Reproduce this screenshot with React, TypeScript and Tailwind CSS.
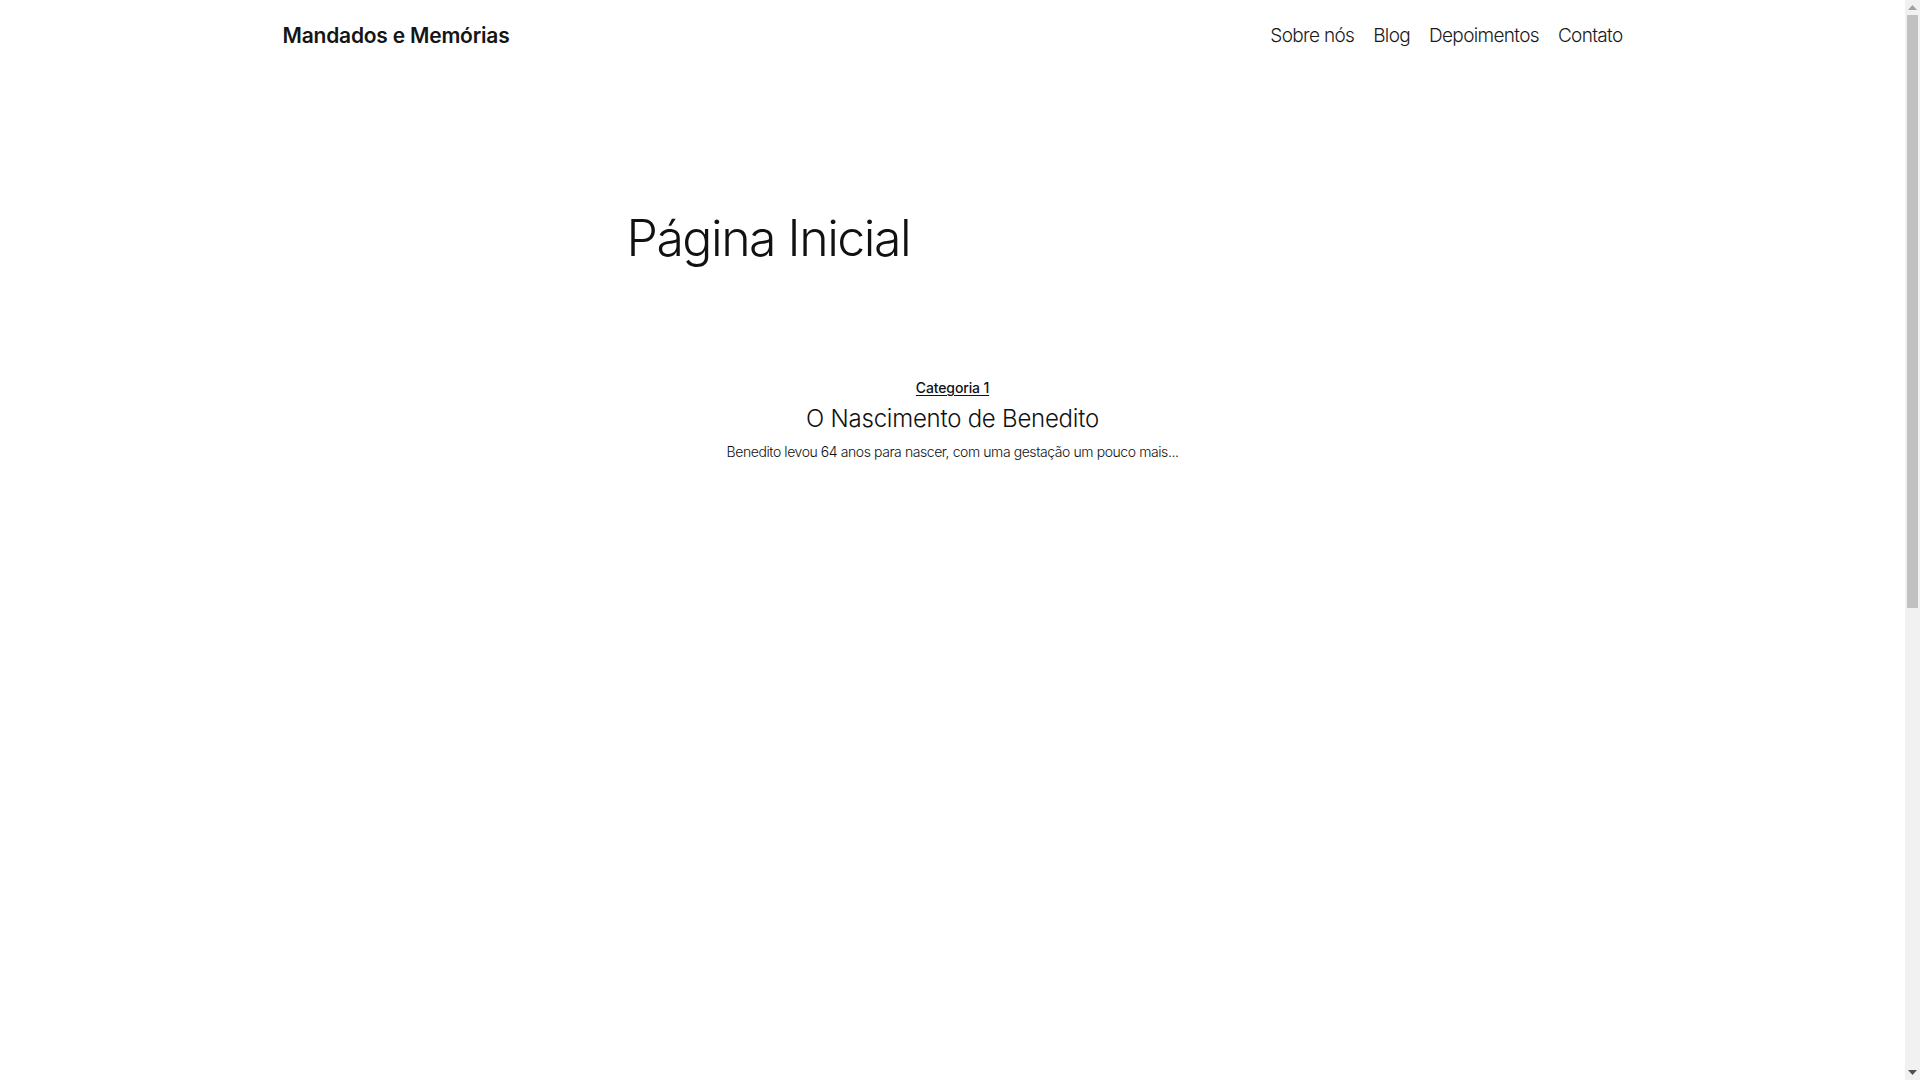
export default function App() {
  const navItems = ['Sobre nós', 'Blog', 'Depoimentos', 'Contato'];

  return (
    <div className="flex h-screen overflow-hidden bg-white text-[#111111] font-['Inter',sans-serif]">
      <div className="flex-1 min-w-0">
        {/* Header */}
        <header className="h-[72px]">
          <div className="max-w-[1340px] mx-auto h-full flex items-center justify-between">
            <a href="#" className="text-[21px] font-semibold tracking-[-0.01em] text-[#151515]">
              Mandados e Memórias
            </a>
            <nav className="flex items-center gap-[19px]">
              {navItems.map((item) => (
                <a
                  key={item}
                  href="#"
                  className="text-[19px] font-light tracking-[-0.035em] text-[#1a1a1a]"
                >
                  {item}
                </a>
              ))}
            </nav>
          </div>
        </header>

        <main>
          <div className="max-w-[652px] mx-auto mt-[136px]">
            <h1 className="text-[50px] leading-[60px] font-light tracking-[-0.03em]">
              Página Inicial
            </h1>
          </div>

          {/* Post list */}
          <section className="mt-[110px] flex flex-col items-center text-center">
            <a
              href="#"
              className="text-[14px] leading-[20px] font-medium tracking-[-0.01em] underline underline-offset-2"
            >
              Categoria 1
            </a>
            <h2 className="mt-[6px] text-[24px] leading-[30px] font-light tracking-[-0.01em]">
              O Nascimento de Benedito
            </h2>
            <p className="mt-[8px] text-[14px] leading-[20px] font-light tracking-[-0.03em]">
              Benedito levou 64 anos para nascer, com uma gestação um pouco mais...
            </p>
          </section>
        </main>
      </div>

      {/* Scrollbar */}
      <aside className="w-[15px] shrink-0 bg-[#f1f1f1] flex flex-col">
        <div className="h-[15px] flex items-center justify-center">
          <svg width="9" height="5" viewBox="0 0 9 5">
            <path d="M4.5 0 L9 5 L0 5 Z" fill="#a3a3a3" />
          </svg>
        </div>
        <div className="mx-[2px] h-[593px] bg-[#c1c1c1]" />
        <div className="flex-1" />
        <div className="h-[15px] flex items-center justify-center">
          <svg width="9" height="5" viewBox="0 0 9 5">
            <path d="M0 0 L9 0 L4.5 5 Z" fill="#505050" />
          </svg>
        </div>
      </aside>
    </div>
  );
}
